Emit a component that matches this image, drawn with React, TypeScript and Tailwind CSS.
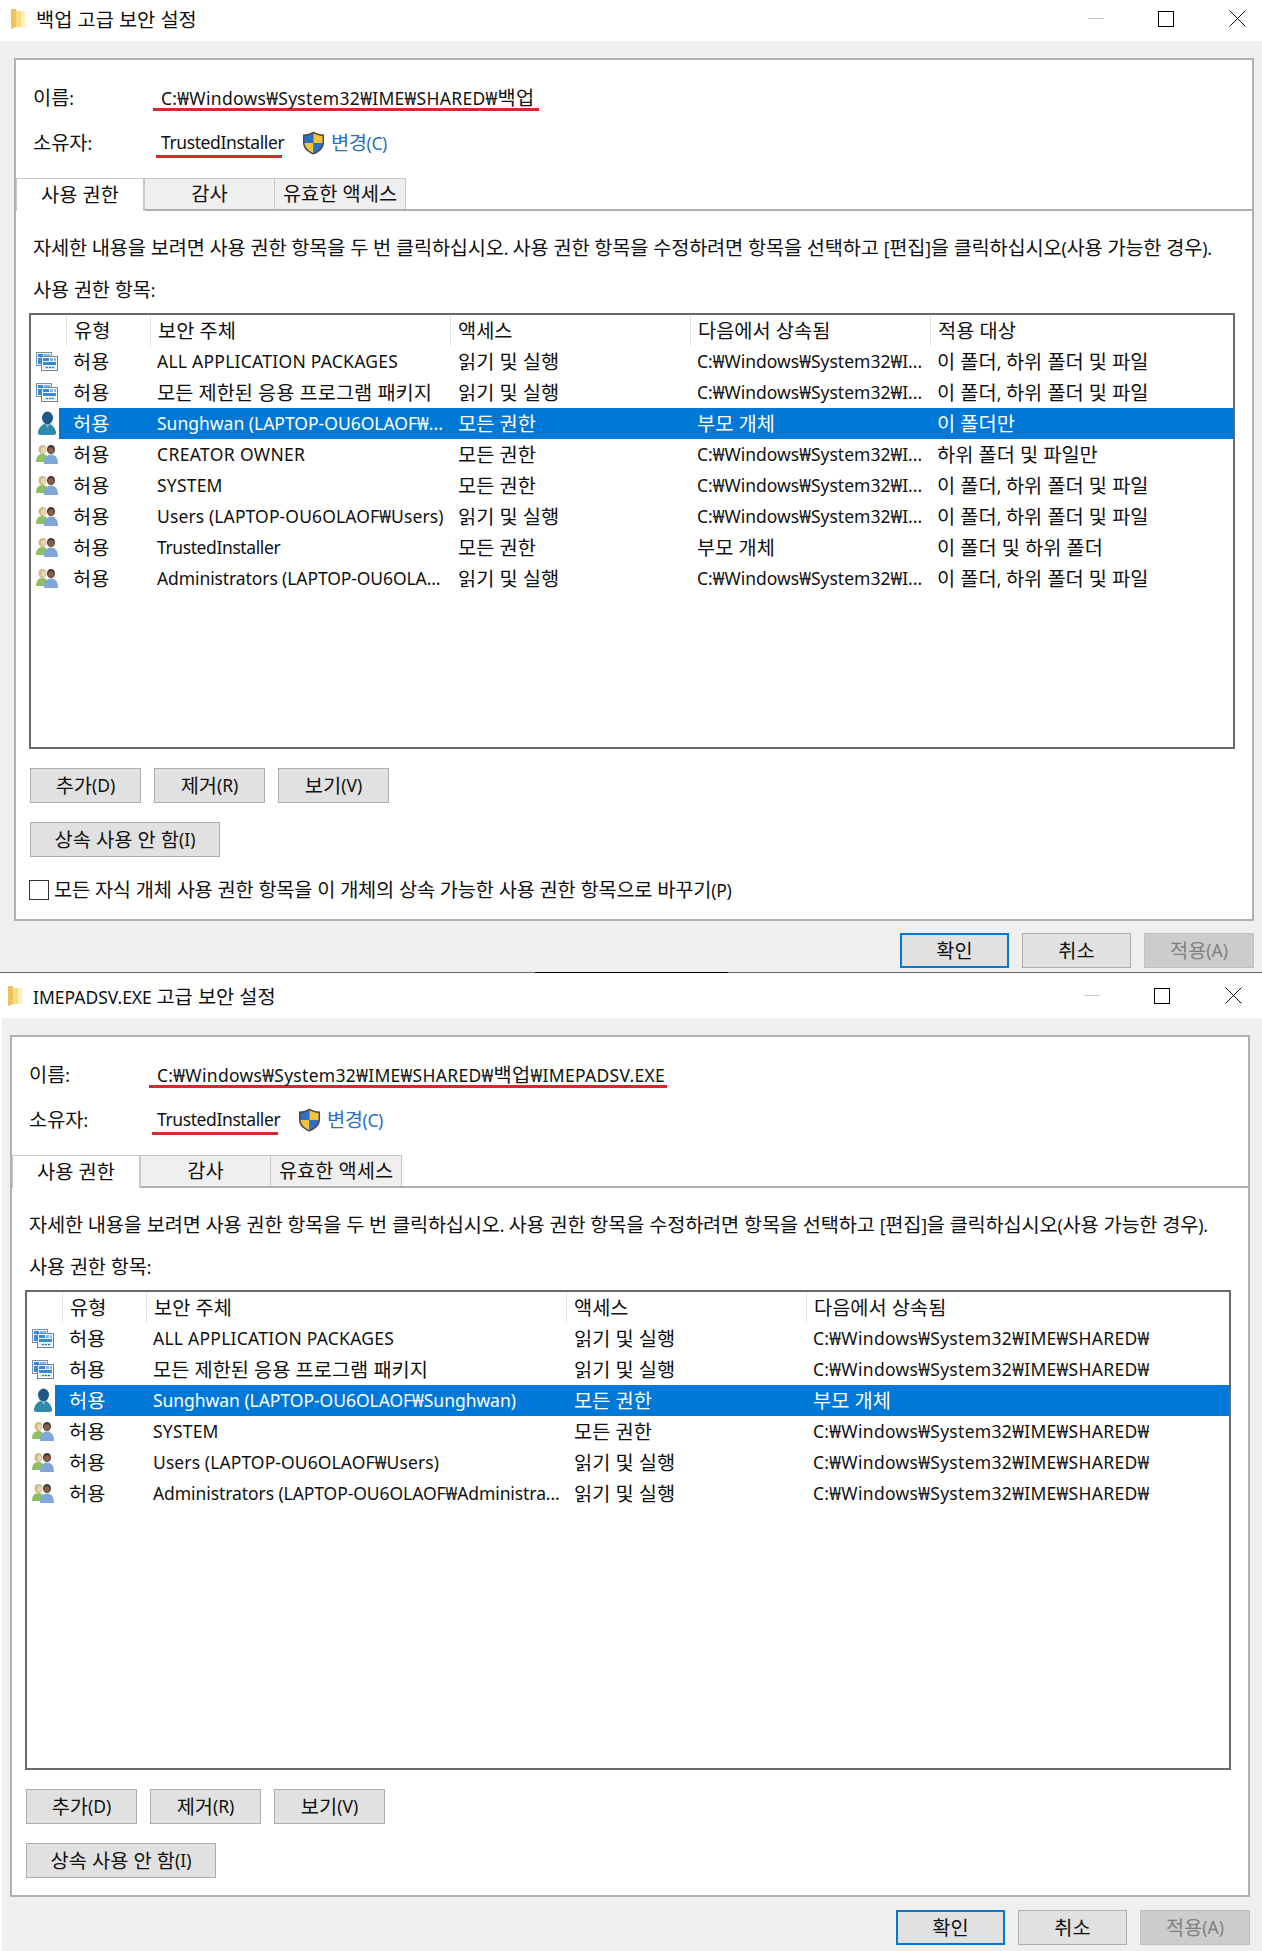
import React from "react";

const FONT = "[font-family:'Noto_Sans','Noto_Sans_CJK_KR',sans-serif]";

function T({ children }: { children: string }) {
  const parts = children.split(/([가-힣][가-힣 ]*)/);
  return (
    <>
      {parts.map((p, i) =>
        i % 2 === 1 ? (
          <span key={i} className="text-[19.75px]">{p}</span>
        ) : (
          <span key={i}>{p}</span>
        )
      )}
    </>
  );
}

function Folder() {
  return (
    <svg width="16" height="22" viewBox="0 0 16 22" className="shrink-0">
      <path d="M1 1h5l1 2h8v16H5l-4 2z" fill="#f8dc85" />
      <path d="M1 1h4l1 1v17l-5 2z" fill="#eec25a" />
      <path d="M11 3h4v16h-4z" fill="#fdeeb8" />
    </svg>
  );
}

function Shield() {
  return (
    <svg width="23" height="24" viewBox="0 0 23 24" className="shrink-0">
      <path d="M11.500 0.500C8.500 2.500 5 3.500 1 3.500v8.500c0 5 4.500 9.500 10.500 11.500C17.500 21.500 22 17 22 12V3.500c-4 0-7.500-1-10.500-3z" fill="#4a4a4a" />
      <path d="M11.500 2.200C9 3.700 6 4.700 2.500 5V12h9z" fill="#2f6fc4" />
      <path d="M11.500 2.200C14 3.700 17 4.700 20.500 5V12h-9z" fill="#f5c33b" />
      <path d="M2.500 12h9v10C6.500 20 3 16.500 2.500 12z" fill="#f5c33b" />
      <path d="M20.500 12h-9v10c5-2 8.500-5.500 9-10z" fill="#2f6fc4" />
    </svg>
  );
}

function PackageIcon() {
  return (
    <svg width="22" height="19" viewBox="0 0 22 19">
      <rect x="0.500" y="0.500" width="15" height="13" fill="#eef4fa" stroke="#7d8fa3" />
      <rect x="2" y="2" width="5" height="3" fill="#2f8be0" />
      <rect x="8" y="2" width="6" height="3" fill="#7fb8ec" />
      <rect x="2" y="6" width="3" height="6" fill="#2f8be0" />
      <rect x="5.500" y="4.500" width="16" height="14" fill="#ffffff" stroke="#6f8296" />
      <rect x="7" y="6" width="6" height="3" fill="#2f8be0" />
      <rect x="14" y="6" width="3" height="3" fill="#7fb8ec" />
      <rect x="18" y="6" width="2" height="3" fill="#7fb8ec" />
      <rect x="7" y="10" width="13" height="3" fill="#2f8be0" />
      <rect x="7" y="14" width="13" height="3" fill="#d6e8f8" />
      <rect x="10" y="15" width="2" height="1" fill="#1f6db8" />
      <rect x="13" y="15" width="2" height="1" fill="#1f6db8" />
      <rect x="16" y="15" width="2" height="1" fill="#1f6db8" />
    </svg>
  );
}

function UserIcon() {
  return (
    <svg width="22" height="25" viewBox="0 0 22 25">
      <ellipse cx="11.500" cy="7" rx="5.500" ry="6.500" fill="#1f5a85" />
      <path d="M5 24c-2.500 0-3.500-1-3-3 .8-3.500 2.500-6.500 6-8h6c3.500 1.500 5.200 4.500 6 8 .5 2-.5 3-3 3z" fill="#2e8aa8" />
      <path d="M9 13l2.500 4 2.500-4z" fill="#6bb8cf" />
    </svg>
  );
}

function GroupIcon() {
  return (
    <svg width="22" height="20" viewBox="0 0 22 20">
      <ellipse cx="6.500" cy="4.500" rx="4" ry="4.500" fill="#cdb888" />
      <ellipse cx="7.500" cy="5" rx="2.300" ry="3" fill="#efd3b5" />
      <path d="M0 17c0-5 2-8 6.500-8S12 12 12 17z" fill="#8fbf62" />
      <ellipse cx="15" cy="4.500" rx="4" ry="4.500" fill="#3d3a38" />
      <ellipse cx="15" cy="5.500" rx="2.800" ry="3.200" fill="#8a5f45" />
      <path d="M8 19c0-6 2.500-9.500 7-9.500S22 13 22 19z" fill="#7ea6d6" />
    </svg>
  );
}

function Btn({ children, w }: { children: string; w: string }) {
  return (
    <div className={`${w} h-[35px] flex items-center justify-center bg-[#e1e1e1] border border-[#adadad] text-[#111]`}>
      <T>{children}</T>
    </div>
  );
}

type Row = { icon: "p" | "u" | "g"; name: string; nt?: string; access: string; from: string; ft?: string; to?: string; sel?: boolean };

const LONG = "C:₩Windows₩System32₩I...";
const FULL = "C:₩Windows₩System32₩IME₩SHARED₩";
const ALL_TO = "이 폴더, 하위 폴더 및 파일";

const row1: Row[] = [
  { icon: "p", name: "ALL APPLICATION PACKAGES", nt: "tracking-[0.25px]", access: "읽기 및 실행", from: LONG, to: ALL_TO },
  { icon: "p", name: "모든 제한된 응용 프로그램 패키지", access: "읽기 및 실행", from: LONG, to: ALL_TO },
  { icon: "u", name: "Sunghwan (LAPTOP-OU6OLAOF₩...", access: "모든 권한", from: "부모 개체", to: "이 폴더만", sel: true },
  { icon: "g", name: "CREATOR OWNER", nt: "tracking-[0.35px]", access: "모든 권한", from: LONG, to: "하위 폴더 및 파일만" },
  { icon: "g", name: "SYSTEM", nt: "tracking-[0.2px]", access: "모든 권한", from: LONG, to: ALL_TO },
  { icon: "g", name: "Users (LAPTOP-OU6OLAOF₩Users)", nt: "tracking-[0.12px]", access: "읽기 및 실행", from: LONG, to: ALL_TO },
  { icon: "g", name: "TrustedInstaller", nt: "tracking-[-0.4px]", access: "모든 권한", from: "부모 개체", to: "이 폴더 및 하위 폴더" },
  { icon: "g", name: "Administrators (LAPTOP-OU6OLA...", nt: "tracking-[-0.1px]", access: "읽기 및 실행", from: LONG, to: ALL_TO },
];
const row2: Row[] = [
  { icon: "p", name: "ALL APPLICATION PACKAGES", nt: "tracking-[0.25px]", access: "읽기 및 실행", from: FULL, ft: "tracking-[0.3px]" },
  { icon: "p", name: "모든 제한된 응용 프로그램 패키지", access: "읽기 및 실행", from: FULL, ft: "tracking-[0.3px]" },
  { icon: "u", name: "Sunghwan (LAPTOP-OU6OLAOF₩Sunghwan)", nt: "tracking-[-0.04px]", access: "모든 권한", from: "부모 개체", sel: true },
  { icon: "g", name: "SYSTEM", nt: "tracking-[0.2px]", access: "모든 권한", from: FULL, ft: "tracking-[0.3px]" },
  { icon: "g", name: "Users (LAPTOP-OU6OLAOF₩Users)", nt: "tracking-[0.1px]", access: "읽기 및 실행", from: FULL, ft: "tracking-[0.3px]" },
  { icon: "g", name: "Administrators (LAPTOP-OU6OLAOF₩Administra...", nt: "tracking-[-0.08px]", access: "읽기 및 실행", from: FULL, ft: "tracking-[0.3px]" },
];

function Head({ w, label }: { w: string; label: string }) {
  return (
    <div className={`${w} h-full border-l border-[#e5e5e5] pl-[7px] flex items-center`}>
      <T>{label}</T>
    </div>
  );
}

function ListBox({ rows, four, h }: { rows: Row[]; four: boolean; h: string }) {
  return (
    <div className={`${h} border-2 border-[#696969] bg-white overflow-hidden`}>
      <div className="flex h-[31px] items-center">
        <div className="w-[35px] h-full" />
        <Head w="w-[84px]" label="유형" />
        <Head w={four ? "w-[300px]" : "w-[420px]"} label="보안 주체" />
        <Head w="w-[240px]" label="액세스" />
        <Head w="w-[240px]" label="다음에서 상속됨" />
        {four && <Head w="w-[240px]" label="적용 대상" />}
      </div>
      {rows.map((r, i) => (
        <div key={i} className="flex h-[31px] items-center">
          <div className="w-[28px] h-full shrink-0 flex items-center justify-center pl-[3px]">
            {r.icon === "p" ? <PackageIcon /> : r.icon === "u" ? <UserIcon /> : <GroupIcon />}
          </div>
          <div className={`flex flex-1 h-full items-center ${r.sel ? "bg-[#0078d7] text-white" : ""}`}>
            <div className="w-[98px] pl-[14px] shrink-0"><T>허용</T></div>
            <div className={`${four ? "w-[293px]" : "w-[413px]"} shrink-0 whitespace-nowrap ${r.nt ?? ""}`}><T>{r.name}</T></div>
            <div className="w-[240px] pl-[8px] shrink-0 whitespace-nowrap"><T>{r.access}</T></div>
            <div className={`w-[240px] pl-[7px] shrink-0 whitespace-nowrap ${r.ft ?? ""}`}><T>{r.from}</T></div>
            {four && <div className="pl-[7px] whitespace-nowrap"><T>{r.to ?? ""}</T></div>}
          </div>
        </div>
      ))}
    </div>
  );
}

function WinTitle({ title, pad }: { title: string; pad: string }) {
  return (
    <div className={`flex items-center bg-white text-[#111] ${pad}`}>
      <Folder />
      <div className="ml-[10px] mt-[2px] text-[17.5px] flex-1 whitespace-nowrap"><T>{title}</T></div>
      <div className="w-[16px] h-px bg-[#c8c8c8] mr-[54px]" />
      <div className="w-[16px] h-[16px] border border-black mr-[55px]" />
      <svg width="17" height="17" viewBox="0 0 17 17">
        <path d="M0.500 0.500l16 16M16.500 0.500l-16 16" stroke="#111" strokeWidth="1" />
      </svg>
    </div>
  );
}

function Panel({ name, nameW, rows, four, check }: { name: string; nameW: string; rows: Row[]; four: boolean; check: boolean }) {
  return (
    <div className="w-[1240px] border-2 border-[#b0b0b0] bg-white text-[17.5px] text-[#111]">
      <div className="pl-[17px] pt-[26px] flex items-center h-[50px]">
        <div className="w-[120px]"><T>이름:</T></div>
        <div className={`${nameW} pl-[8px] h-[26px] leading-[26px] border-b-[3px] border-[#d9272e] whitespace-nowrap tracking-[0.3px]`}><T>{name}</T></div>
      </div>
      <div className="pl-[17px] pt-[17px] flex items-center h-[49px]">
        <div className="w-[123px]"><T>소유자:</T></div>
        <div className="w-[126px] pl-[5px] h-[29px] leading-[27px] border-b-[3px] border-[#d9272e] whitespace-nowrap tracking-[-0.4px]">TrustedInstaller</div>
        <div className="ml-[20px] mr-[6px]"><Shield /></div>
        <div className="text-[#2a6fc4] tracking-[-0.4px]"><T>변경(C)</T></div>
      </div>
      <div className="mt-[19px] flex h-[33px] border-b-2 border-[#b0b0b0]">
        <div className="w-[129px] h-[33px] bg-white border-t border-l border-r-2 border-[#c8c8c8] flex items-center justify-center"><T>사용 권한</T></div>
        <div className="w-[130px] h-[31px] bg-[#efefef] border-t border-r border-[#c8c8c8] flex items-center justify-center"><T>감사</T></div>
        <div className="w-[131px] h-[31px] bg-[#efefef] border-t border-r border-[#c8c8c8] flex items-center justify-center"><T>유효한 액세스</T></div>
      </div>
      <div className="px-[17px]">
        <div className="mt-[23px] h-[28px] leading-[28px] whitespace-nowrap tracking-[-0.2px]"><T>자세한 내용을 보려면 사용 권한 항목을 두 번 클릭하십시오. 사용 권한 항목을 수정하려면 항목을 선택하고 [편집]을 클릭하십시오(사용 가능한 경우).</T></div>
        <div className="mt-[14px] h-[28px] leading-[28px] tracking-[-0.2px]"><T>사용 권한 항목:</T></div>
        <div className="-ml-[4px]">
          <div className="mt-[9px]">
            <ListBox rows={rows} four={four} h={check ? "w-[1206px] h-[436px]" : "w-[1206px] h-[480px]"} />
          </div>
          <div className="ml-[1px] mt-[19px] flex gap-[13px]">
            <Btn w="w-[111px]">추가(D)</Btn>
            <Btn w="w-[111px]">제거(R)</Btn>
            <Btn w="w-[111px]">보기(V)</Btn>
          </div>
          <div className="ml-[1px] mt-[19px]">
            <Btn w="w-[190px]">상속 사용 안 함(I)</Btn>
          </div>
          {check ? (
            <div className="mt-[23px] mb-[19px] h-[20px] flex items-center">
              <div className="w-[20px] h-[20px] border border-[#333] mr-[5px]" />
              <div className="whitespace-nowrap tracking-[-0.2px]"><T>모든 자식 개체 사용 권한 항목을 이 개체의 상속 가능한 사용 권한 항목으로 바꾸기(P)</T></div>
            </div>
          ) : (
            <div className="h-[17px]" />
          )}
        </div>
      </div>
    </div>
  );
}

function Footer({ mt }: { mt: string }) {
  return (
    <div className={`${mt} flex justify-end gap-[13px] text-[17.5px]`}>
      <div className="w-[109px] h-[35px] bg-[#e1e1e1] border-2 border-[#0078d7] flex items-center justify-center text-[#111]"><T>확인</T></div>
      <div className="w-[109px] h-[35px] bg-[#e1e1e1] border border-[#adadad] flex items-center justify-center text-[#111]"><T>취소</T></div>
      <div className="w-[110px] h-[35px] bg-[#cccccc] border border-[#bfbfbf] flex items-center justify-center text-[#808080]"><T>적용(A)</T></div>
    </div>
  );
}

export default function App() {
  return (
    <div className={`w-[1262px] h-[1951px] bg-white overflow-hidden ${FONT}`}>
      <div className="h-[972px] flex flex-col">
        <WinTitle title="백업 고급 보안 설정" pad="h-[41px] pb-[4px] pl-[10px] pr-[16px]" />
        <div className="flex-1 bg-[#efefef] pt-[17px] pl-[14px] pr-[8px]">
          <Panel name="C:₩Windows₩System32₩IME₩SHARED₩백업" nameW="w-[386px]" rows={row1} four check />
          <Footer mt="mt-[12px]" />
        </div>
      </div>
      <div className="flex h-px">
        <div className="w-[535px] bg-[#696969]" />
        <div className="w-[193px] bg-black" />
        <div className="flex-1 bg-[#696969]" />
      </div>
      <div className="flex flex-col h-[978px]">
        <WinTitle title="IMEPADSV.EXE 고급 보안 설정" pad="h-[45px] pl-[7px] pr-[20px]" />
        <div className="flex-1 pl-[2px]">
          <div className="h-full bg-[#efefef] pt-[17px] pl-[8px] pr-[12px]">
            <Panel name="C:₩Windows₩System32₩IME₩SHARED₩백업₩IMEPADSV.EXE" nameW="w-[518px]" rows={row2} four={false} check={false} />
            <Footer mt="mt-[13px]" />
          </div>
        </div>
      </div>
    </div>
  );
}
